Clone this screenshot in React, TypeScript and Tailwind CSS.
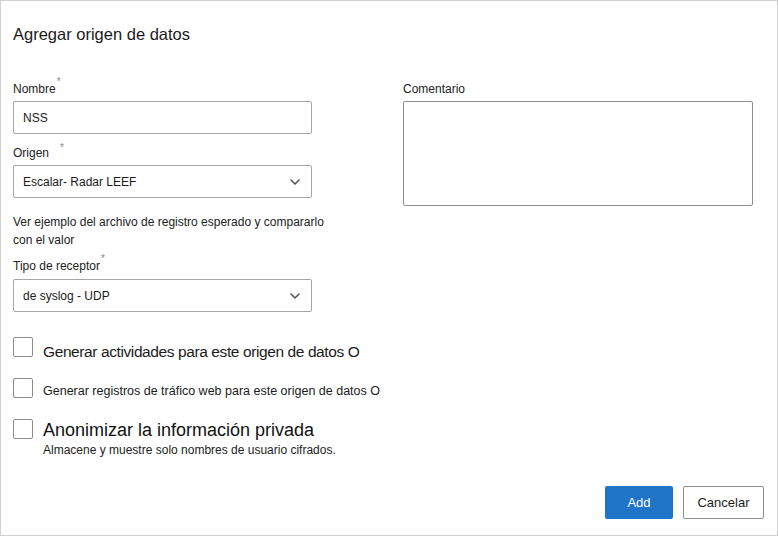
import React from 'react';

const font = { fontFamily: '"Liberation Sans", Arial, sans-serif' };

function Chevron() {
  return (
    <svg width="10" height="6" viewBox="0 0 10 6" className="shrink-0">
      <path d="M1 1l4 4 4-4" fill="none" stroke="#555" strokeWidth="1.6" strokeLinecap="round" strokeLinejoin="round" />
    </svg>
  );
}

function Label({ text, gap = false }: { text: string; gap?: boolean }) {
  return (
    <div className="h-[18px] leading-[18px] text-[12px] text-[#222] flex items-start">
      <span>{text}</span>
      <span className={`text-[10px] leading-[12px] text-[#8a8a8a] ${gap ? 'ml-[11px] mt-[-2px]' : 'ml-[1px] mt-[-4px]'}`}>*</span>
    </div>
  );
}

function Select({ value }: { value: string }) {
  return (
    <div className="h-[33px] border border-[#a6a6a6] rounded-[2px] bg-white flex items-center justify-between pl-[9px] pr-[11px] text-[12px] text-[#1b1b1b]">
      <span>{value}</span>
      <Chevron />
    </div>
  );
}

function Box() {
  return <div className="w-[20px] h-[20px] border border-[#8c8c8c] rounded-[2px] bg-white shrink-0" />;
}

export default function App() {
  return (
    <div style={font} className="w-[778px] h-[536px] border border-[#d0d0d0] bg-white pl-[12px] flex flex-col text-[#1b1b1b]">
      <div className="mt-[23px] h-[20px] leading-[20px] text-[16.5px] text-[#1a1a1a]">Agregar origen de datos</div>

      <div className="mt-[36px] flex">
        <div className="w-[299px] flex flex-col">
          <Label text="Nombre" />
          <div className="mt-[3px] h-[33px] border border-[#a6a6a6] rounded-[2px] flex items-center pl-[9px] text-[12px]">NSS</div>
          <div className="mt-[10px]">
            <Label text="Origen" gap />
          </div>
          <div className="mt-[3px]">
            <Select value="Escalar- Radar LEEF" />
          </div>
          <div className="mt-[15px] text-[12px] leading-[18px] text-[#222] whitespace-nowrap">
            Ver ejemplo del archivo de registro esperado y compararlo
            <br />
            con el valor
          </div>
          <div className="mt-[8px]">
            <Label text="Tipo de receptor" />
          </div>
          <div className="mt-[4px]">
            <Select value="de syslog - UDP" />
          </div>
        </div>

        <div className="ml-[91px] w-[350px] flex flex-col">
          <div className="h-[18px] leading-[18px] text-[12px] text-[#222]">Comentario</div>
          <div className="mt-[3px] h-[105px] border border-[#8f8f8f] rounded-[2px]" />
        </div>
      </div>

      <div className="mt-[25px] flex items-start">
        <Box />
        <div className="ml-[10px] mt-[5px] h-[15px] leading-[20px] text-[15.5px] tracking-[-0.4px] text-[#1b1b1b] whitespace-nowrap">
          Generar actividades para este origen de datos O
        </div>
      </div>

      <div className="mt-[21px] flex items-start">
        <Box />
        <div className="ml-[10px] mt-[4px] h-[16px] leading-[18px] text-[12.5px] text-[#1b1b1b] whitespace-nowrap">
          Generar registros de tráfico web para este origen de datos O
        </div>
      </div>

      <div className="mt-[21px] flex items-start">
        <Box />
        <div className="ml-[10px] flex flex-col">
          <div className="h-[22px] leading-[22px] text-[18px] text-[#111]">Anonimizar la información privada</div>
          <div className="h-[18px] leading-[18px] text-[12px] text-[#222]">Almacene y muestre solo nombres de usuario cifrados.</div>
        </div>
      </div>

      <div className="mt-[27px] flex justify-end gap-[10px] pr-[13px]">
        <button className="w-[68px] h-[33px] rounded-[2px] bg-[#1f74c8] text-white text-[13px]">Add</button>
        <button className="w-[81px] h-[33px] rounded-[2px] border border-[#8f8f8f] bg-white text-[#1b1b1b] text-[13px]">Cancelar</button>
      </div>
    </div>
  );
}
